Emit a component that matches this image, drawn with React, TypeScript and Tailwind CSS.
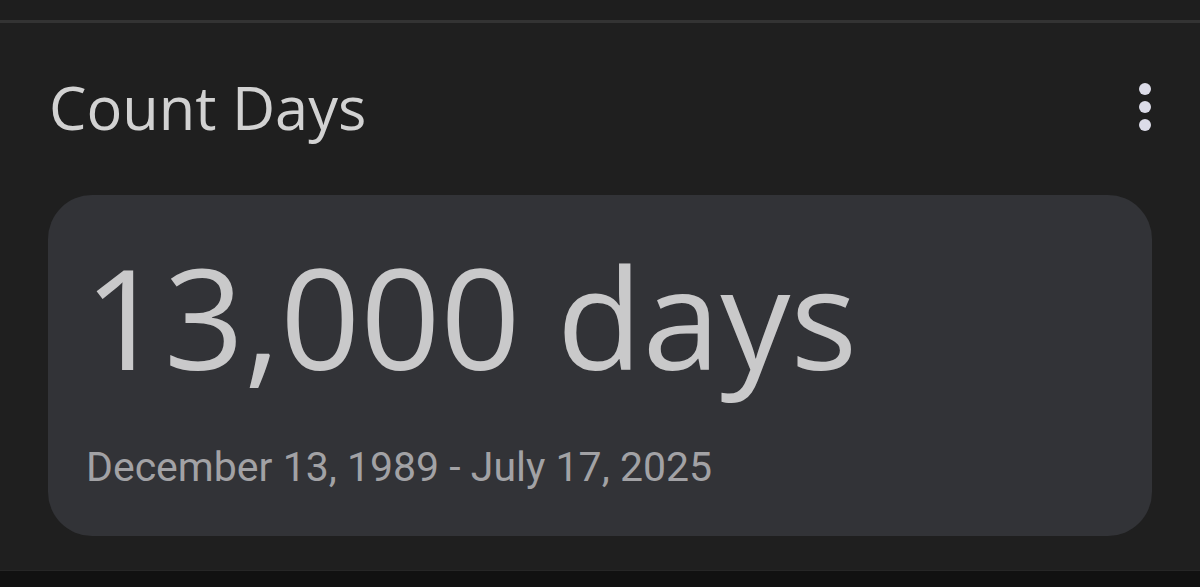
import React from "react";

export default function App() {
  return (
    <div className="w-[1200px] h-[587px] flex flex-col bg-[#1f1f1f] overflow-hidden">
      <div className="h-[20px] bg-[#1e1e1e]" />
      <div className="h-[3px] bg-[#333333]" />
      <div className="flex-1 flex flex-col px-[48px]">
        <div className="h-[172px] flex items-start justify-between">
          <div
            className="mt-[44px] ml-[1px] text-[59.5px] leading-[80px] text-[#d2d2d2]"
            style={{ fontFamily: "'Open Sans', Lato, sans-serif" }}
          >
            Count Days
          </div>
          <div className="mt-[60px] mr-[1px] flex flex-col items-center gap-[6px] w-[12px]">
            <span className="block w-[12px] h-[12px] rounded-full bg-[#dcdce8]" />
            <span className="block w-[12px] h-[12px] rounded-full bg-[#dcdce8]" />
            <span className="block w-[12px] h-[12px] rounded-full bg-[#dcdce8]" />
          </div>
        </div>
        <div className="h-[341px] rounded-[44px] bg-[#323337] flex flex-col pl-[36px] pt-[46px]">
          <div
            className="text-[140px] leading-[150px] text-[#c9c9ca]"
            style={{ fontFamily: "'Open Sans', Lato, sans-serif" }}
          >
            13,000 days
          </div>
          <div
            className="mt-[52px] ml-[2px] text-[41px] leading-[48px] text-[#a2a2a5]"
            style={{ fontFamily: "Roboto, 'Liberation Sans', sans-serif" }}
          >
            December 13, 1989 - July 17, 2025
          </div>
        </div>
      </div>
      <div className="h-[1px] bg-[#262626]" />
      <div className="h-[16px] bg-[#111111]" />
    </div>
  );
}
